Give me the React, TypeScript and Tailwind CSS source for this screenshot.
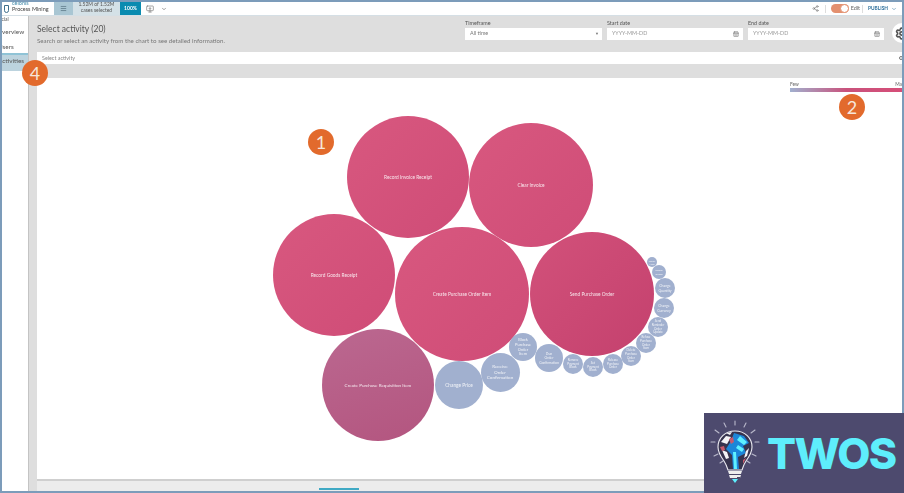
import { CalendarDays, ChevronDown, Settings, Share2, Menu, MonitorDown } from 'lucide-react';

const pink = 'bg-[linear-gradient(135deg,#d8587f,#cf4c77)]';
const blue = 'bg-[#a1b0cf]';

// x, y = centre in page pixels (chart origin is 37,78)
const bubbles = [
  { label: 'Record Invoice Receipt', x: 408, y: 177, r: 61, tone: pink, text: 'text-[4.8px]' },
  { label: 'Clear Invoice', x: 531, y: 185, r: 62, tone: pink, text: 'text-[4.8px]' },
  { label: 'Record Goods Receipt', x: 334, y: 275, r: 61, tone: pink, text: 'text-[4.8px]' },
  { label: 'Create Purchase Order Item', x: 462, y: 294, r: 67, tone: pink, text: 'text-[4.8px]' },
  { label: 'Send Purchase Order', x: 592, y: 294, r: 62, tone: 'bg-[linear-gradient(135deg,#d2517a,#c4416e)]', text: 'text-[4.8px]' },
  { label: 'Create Purchase Requisition Item', x: 378, y: 385, r: 56, tone: 'bg-[linear-gradient(160deg,#bb6890,#b3557f)]', text: 'text-[4.6px]' },
  { label: 'Change Price', x: 459, y: 385, r: 24, tone: blue, text: 'text-[4.8px]' },
  { label: 'Receive\nOrder\nConfirmation', x: 500, y: 372, r: 19.5, tone: blue, text: 'text-[4.6px]' },
  { label: 'Block\nPurchase\nOrder\nItem', x: 523, y: 347, r: 14, tone: blue, text: 'text-[4px]' },
  { label: 'Dun\nOrder\nConfirmation', x: 549, y: 358, r: 14, tone: blue, text: 'text-[3.4px]' },
  { label: 'Remove\nPayment\nBlock', x: 573, y: 364, r: 10, tone: blue, text: 'text-[3px]' },
  { label: 'Set\nPayment\nBlock', x: 593, y: 367, r: 10, tone: blue, text: 'text-[3px]' },
  { label: 'Release\nPurchase\nOrder', x: 613, y: 364, r: 10, tone: blue, text: 'text-[3px]' },
  { label: 'Delete\nPurchase\nOrder\nItem', x: 631, y: 356, r: 10, tone: blue, text: 'text-[3px]' },
  { label: 'Refuse\nPurchase\nOrder\nItem', x: 646, y: 343, r: 10, tone: blue, text: 'text-[3px]' },
  { label: 'Send\nReminder\nOrder\nUpdate', x: 658, y: 327, r: 10, tone: blue, text: 'text-[3px]' },
  { label: 'Change\nCurrency', x: 664, y: 308, r: 10, tone: blue, text: 'text-[3.4px]' },
  { label: 'Change\nQuantity', x: 665, y: 288, r: 10, tone: blue, text: 'text-[3.4px]' },
  { label: 'Cancel\nGoods', x: 659, y: 272, r: 7, tone: blue, text: 'text-[2.6px]' },
  { label: 'Vendor\nName', x: 652, y: 262, r: 5, tone: blue, text: 'text-[2px]' },
];

function Badge({ n, className }: { n: number; className: string }) {
  return (
    <div className={`absolute z-10 w-[26px] h-[26px] rounded-full bg-[#e26a2c] text-[#f6e6da] text-[18px] leading-none flex items-center justify-center ${className}`}>
      {n}
    </div>
  );
}

function DateField({ label }: { label: string }) {
  return (
    <div className="w-[136px]">
      <div className="text-[5.4px] leading-[7px] text-[#555]">{label}</div>
      <div className="h-3 mt-px bg-white flex items-center justify-between pl-[5px] pr-1 text-[5.4px] text-[#999]">
        YYYY-MM-DD
        <CalendarDays size={6} className="text-[#666]" />
      </div>
    </div>
  );
}

function Bulb() {
  const rays = [
    [25, 2, 25, 6], [14, 4, 16, 8], [36, 4, 34, 8], [5, 11, 9, 14], [45, 11, 41, 14],
    [1, 23, 5, 23], [49, 23, 45, 23], [4, 37, 8, 35], [46, 37, 42, 35], [10, 44, 13, 42], [40, 44, 37, 42],
  ];
  return (
    <svg viewBox="0 0 52 68" className="w-[52px] h-[68px] shrink-0">
      {rays.map(([a, b, c, d], i) => (
        <line key={i} x1={a} y1={b} x2={c} y2={d} stroke="#b9b9cb" strokeWidth="1.1" strokeLinecap="round" />
      ))}
      <path d="M25 12C15 12 8 19 8 28c0 6 3 10 6 14 2 3 3 6 4 9h14c1-3 2-6 4-9 3-4 6-8 6-14 0-9-7-16-17-16z" fill="#37344f" stroke="#ecebf2" strokeWidth="1.1" />
      <path d="M24 14l10 3 5 7-6 3 3 7-8 4 1 12h-6l-1-14-6-6 5-8z" fill="#1c86d8" />
      <path d="M30 17l7 6-3 3-7-5zM28 26l6 4-2 3-6-4zM23 33h3l1 17h-3z" fill="#5ef0ff" />
      <path d="M11 23l5-6 5 1-4 7zM12 31l5 2 2 6-3 1zM36 32l3-3-2 8-3 2zM16 14l6-1-2 3z" fill="#f4f3f6" />
      <path d="M10 28l4-1 1 4-3 1zM19 20l4-2 1 5-3 2zM33 41l3-2-3 6z" fill="#c75a6d" />
      <path d="M18 52h14l-1 3H19zM19 56h12l-1 3H20z" fill="#eeeeee" />
      <path d="M20 55h4v1h-4zM27 58h3v1h-3z" fill="#4a4763" />
      <path d="M22 60h6l-3 4z" fill="#5ef0ff" />
    </svg>
  );
}

export default function App() {
  return (
    <div className="relative w-[904px] h-[493px] overflow-hidden bg-[#7c9cba] p-0.5 font-['Lato','Liberation_Sans',sans-serif]">
      <div className="flex flex-col h-full overflow-hidden bg-[#dedede] blur-[0.35px]">
        {/* Top bar */}
        <div className="h-[14px] shrink-0 bg-white border-b border-[#d5dfe5] flex items-center text-[#555]">
          <div className="w-[10px] h-full flex items-center pl-0.5">
            <div className="w-[5px] h-[8px] border border-[#3f6f8c] rounded-b-sm" />
          </div>
          <div className="w-[42px] h-full text-[5.5px] leading-[6px] whitespace-nowrap overflow-hidden">
            <div className="text-[#3d87a8] -mt-[2px]">celonis</div>
            <div className="text-[#444]">Process Mining</div>
          </div>
          <div className="w-[19px] h-full bg-[#a9c6d3] flex items-center justify-center">
            <Menu size={7} className="text-[#45606e]" />
          </div>
          <div className="w-[47px] h-full bg-[#d4e1e7] text-[5px] leading-[6px] text-center text-[#555] overflow-hidden">
            <div className="-mt-[1px]">1.52M of 1.52M</div>
            <div>cases selected</div>
          </div>
          <div className="w-[21px] h-full bg-[#0a8bb0] text-white text-[5px] font-bold flex items-center justify-center">100%</div>
          <MonitorDown size={8} className="ml-[5px] text-[#777]" />
          <ChevronDown size={6} className="ml-[7px] text-[#444]" />
          <div className="ml-auto flex items-center">
            <Share2 size={7} className="text-[#777]" />
            <div className="ml-[6px] w-px h-2 bg-[#ddd]" />
            <div className="ml-[5px] w-[18px] h-[9px] rounded-full bg-[#e3906f] flex justify-end">
              <div className="w-[9px] h-[9px] rounded-full bg-white border border-[#e3906f]" />
            </div>
            <span className="ml-0.5 text-[5.5px] text-[#666]">Edit</span>
            <div className="ml-[2px] w-px h-2 bg-[#ddd]" />
            <span className="ml-[5px] text-[4.8px] font-bold text-[#2d6f9c]">PUBLISH</span>
            <ChevronDown size={6} className="ml-[3px] mr-[5px] text-[#2d6f9c]" />
          </div>
        </div>

        <div className="flex flex-1 min-h-0">
          {/* Sidebar, its labels run under the left edge as in the capture */}
          <div className="w-[27px] shrink-0 bg-white border-r border-[#c4c4c4] text-[6.4px] text-[#555] overflow-hidden whitespace-nowrap">
            <div className="h-[6px] leading-[6px] -ml-[6px] text-[5px]">Social</div>
            <div className="h-[15px] leading-[15px] -ml-[5px] mt-[2px]">Overview</div>
            <div className="h-[14px] leading-[15px] -ml-[4px]">Users</div>
            <div className="h-[18px] leading-[12px] bg-[#bcd3de] border-t-2 border-[#8fc3d6]">
              <span className="-ml-[4px] block">Activities</span>
            </div>
          </div>

          <div className="flex-1 min-w-0 flex flex-col pl-2">
            {/* Header */}
            <div className="h-[36px] shrink-0 flex">
              <div className="w-[428px] shrink-0 pt-[7px]">
                <div className="text-[8.5px] leading-[12px] text-[#555]">Select activity (20)</div>
                <div className="mt-0.5 text-[6.17px] leading-[8px] text-[#777]">Search or select an activity from the chart to see detailed information.</div>
              </div>
              <div className="flex gap-[5px] shrink-0 pt-[3.5px]">
                <div className="w-[137px]">
                  <div className="text-[5.4px] leading-[7px] text-[#555]">Timeframe</div>
                  <div className="h-3 mt-px bg-white flex items-center justify-between pl-[5px] pr-[3px] text-[5.4px] text-[#777]">
                    All time
                    <span className="text-[4px]">▼</span>
                  </div>
                </div>
                <DateField label="Start date" />
                <DateField label="End date" />
              </div>
              <div className="ml-[8px] mt-[7px] w-5 h-5 shrink-0 rounded-full bg-white flex items-center pl-[3px]">
                <Settings size={13} strokeWidth={3} className="text-[#555] shrink-0" />
              </div>
            </div>

            {/* Search row */}
            <div className="h-3 shrink-0 bg-white flex items-center justify-between pl-[5px] text-[5.4px] text-[#888]">
              Select activity
              <span className="w-1 h-1 rounded-full border border-[#777] -mr-px" />
            </div>
            <div className="h-[14px] shrink-0" />

            {/* Chart canvas */}
            <div className="relative flex-1 min-h-0 bg-white overflow-hidden">
              <div className="absolute left-[753px] top-[3px] w-[117px] text-[4.8px] leading-[6px] text-[#666] flex justify-between">
                <span>Few</span>
                <span>Many</span>
              </div>
              <div className="absolute left-[753px] top-[10px] w-[113px] h-[4px] bg-[linear-gradient(90deg,#a1b0cf,#c9527c,#d64e78)]" />
              {bubbles.map((b) => (
                <div
                  key={b.label}
                  className={`absolute rounded-full flex items-center justify-center text-center text-white/85 leading-[1.2] whitespace-pre-line pt-px ${b.tone} ${b.text}`}
                  style={{ left: b.x - b.r - 37, top: b.y - b.r - 78, width: b.r * 2, height: b.r * 2 }}
                >
                  {b.label}
                </div>
              ))}
            </div>

            {/* Bottom strip */}
            <div className="h-[12px] shrink-0 border-t-2 border-[#cfcfcf] bg-[#ececec] relative">
              <div className="absolute left-[282px] top-[7px] w-[40px] h-0.5 bg-[#3fa9c4]" />
            </div>
          </div>
        </div>
      </div>

      <Badge n={4} className="left-[22px] top-[60px]" />
      <Badge n={1} className="left-[308px] top-[129px]" />
      <Badge n={2} className="left-[839px] top-[94px]" />

      {/* Logo */}
      <div className="absolute left-[704px] top-[413px] w-[200px] h-[80px] bg-[#4d4a6e] flex items-center pl-[6px]">
        <Bulb />
        <span className="ml-[5px] font-['Inter','Liberation_Sans',sans-serif] font-extrabold text-[43px] leading-none tracking-[-1.5px] text-[#5eeefc]">TWOS</span>
      </div>
    </div>
  );
}
